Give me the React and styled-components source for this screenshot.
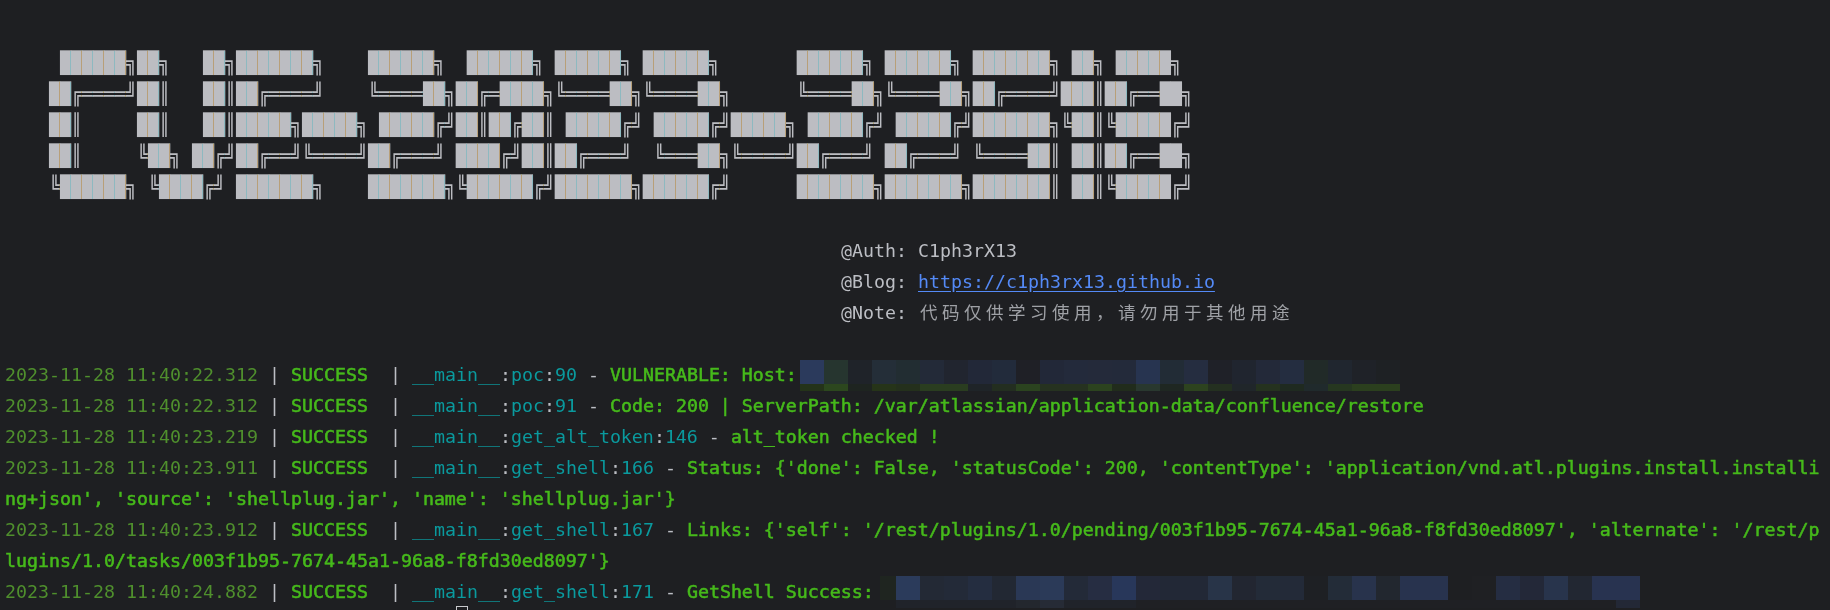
import React from 'react';
import styled, { createGlobalStyle } from 'styled-components';

const GlobalStyle = createGlobalStyle`
  html, body {
    margin: 0;
    height: 610px;
    overflow: hidden;
    background: #1e1f22;
  }
`;

const Terminal = styled.div`
  height: 610px;
  overflow: hidden;
  padding: 47px 0 0 5px;
  box-sizing: border-box;
  background: #1e1f22;
  color: #bcbec4;
  font-family: "DejaVu Sans Mono", "Liberation Mono", "Noto Sans CJK SC", monospace;
  font-size: 18.27px;
  line-height: 31px;
`;

const Line = styled.div`
  height: 31px;
  white-space: pre;
`;

const ArtBlock = styled.div`
  position: relative;
  width: 1155px;
  height: 155px;
  margin-bottom: 33px;
  color: #bcbdc2;

  /* seams between the block cells, darken leaves the dark background alone */
  &::after {
    content: '';
    position: absolute;
    inset: 0;
    mix-blend-mode: darken;
    background: repeating-linear-gradient(
      90deg,
      #b89f78 0 1px,
      transparent 1px 11px,
      #8db9c0 11px 12px,
      transparent 12px 22px
    );
    background-position: 10px 0;
  }
`;

const ArtLine = styled.div`
  height: 31px;
  white-space: pre;
  transform: scaleY(1.14);
`;

const Meta = styled.div`
  padding-left: 836px;
  margin-bottom: 31px;
`;

const Link = styled.a`
  color: #548af7;
  text-decoration: underline;
  text-underline-offset: 3px;
`;

const Cjk = styled.span`
  margin-left: 2px;
  font-family: "Noto Sans CJK SC", sans-serif;
  font-size: 17.5px;
  line-height: 0;
  letter-spacing: 4.5px;
  color: #9fa1a6;
`;

const Stamp = styled.span`
  color: #4f8f2d;
`;

const Level = styled.span`
  color: #46ba1b;
  -webkit-text-stroke: 0.55px #46ba1b;
`;

const Source = styled.span`
  color: #0a9a9e;
`;

const Mosaic = styled.span`
  position: relative;
  display: inline-block;
  width: 0;
  height: 0;
  vertical-align: top;
`;

const MosaicGrid = styled.span`
  position: absolute;
  left: ${(p) => p.$left}px;
  top: ${(p) => p.$top}px;
  display: grid;
  grid-template-columns: repeat(${(p) => p.$cols}, 24px);
  grid-template-rows: 24px ${(p) => p.$foot}px;
`;

const Tile = styled.span`
  background: ${(p) => p.$color};
`;

const FaintEdge = styled.span`
  position: absolute;
  left: 6px;
  top: 0;
  width: 16px;
  height: 24px;
  background: #1f2520;
`;

const Cursor = styled.span`
  display: inline-block;
  box-sizing: border-box;
  width: 12px;
  height: 24px;
  margin-top: -1px;
  border: 1px solid #c8c9cc;
  vertical-align: top;
`;

// the E and the first hyphen overlap in the banner, so they are one glyph here
const GLYPHS = {
  C: [' ██████╗', '██╔════╝', '██║     ', '██║     ', '╚██████╗'],
  V: ['██╗   ██╗', '██║   ██║', '██║   ██║', '╚██╗ ██╔╝', ' ╚████╔╝ '],
  E: ['███████╗    ', '██╔════╝    ', '█████╗█████╗', '██╔══╝╚════╝', '███████╗    '],
  '-': ['      ', '      ', '█████╗', '╚════╝', '      '],
  2: ['██████╗ ', '╚════██╗', ' █████╔╝', '██╔═══╝ ', '███████╗'],
  0: [' ██████╗ ', '██╔═████╗', '██║██╔██║', '████╔╝██║', '╚██████╔╝'],
  3: ['██████╗ ', '╚════██╗', ' █████╔╝', ' ╚═══██╗', '██████╔╝'],
  5: ['███████╗', '██╔════╝', '███████╗', '╚════██║', '███████║'],
  1: [' ██╗', '███║', '╚██║', ' ██║', ' ██║'],
  8: [' █████╗ ', '██╔══██╗', '╚█████╔╝', '██╔══██╗', '╚█████╔╝'],
};

const ART = [0, 1, 2, 3, 4].map((row) =>
  '    ' + [...'CVE2023-22518'].map((ch) => GLYPHS[ch][row]).join('')
);

const HOST_TOP = [
  '#2b3a5c', '#26352f', '#1f2329', '#242e38', '#222d32', '#232a38', '#21252f', '#222838', '#222b3b',
  '#1f2026', '#222838', '#232a3b', '#242a3a', '#232a3a', '#273450', '#222c36', '#252d40', '#1f2128',
  '#20252f', '#232939', '#242d40', '#212a28', '#20262f', '#1f2228', '#1e2124',
];
const HOST_FOOT = [
  '#243319', '#2c471e', '#1e2420', '#263419', '#24301c', '#2a3d20', '#2a3d20', '#1f2428', '#232e20',
  '#2b431f', '#263220', '#263220', '#2c431f', '#212c1c', '#29382f', '#1f2722', '#2d431f', '#243020',
  '#20262a', '#25321f', '#1f2a20', '#202a2c', '#263720', '#2b3f1e', '#2b3f1e',
];
const SHELL_TOP = [
  '#2b3b5b', '#232935', '#232a38', '#242d40', '#222833', '#2a3855', '#2b3a58', '#232a38', '#262d42',
  '#28375a', '#232838', '#222836', '#222836', '#283448', '#222631', '#232b38', '#232a38', '#1e2024',
  '#232c38', '#28334c', '#22272f', '#28334e', '#28334e', '#1e1f22', '#1f2023', '#252d42', '#232838',
  '#28344c', '#222732', '#283350', '#283350',
];
const SHELL_FOOT = SHELL_TOP.map((_, i) => {
  if (i === 5) return '#23272e';
  if (i === 6) return '#262b36';
  if (i === 30) return '#232836';
  return i < 10 ? '#20232a' : '#1f2024';
});

const Tiles = ({ top, foot, left, offset, height }) => (
  <Mosaic>
    <MosaicGrid $left={left} $top={offset} $cols={top.length} $foot={height}>
      {top.map((c, i) => <Tile key={`t${i}`} $color={c} />)}
      {foot.map((c, i) => <Tile key={`f${i}`} $color={c} />)}
    </MosaicGrid>
  </Mosaic>
);

const Log = ({ time, func, line, children }) => (
  <Line>
    <Stamp>2023-11-28 {time}</Stamp> | <Level>SUCCESS </Level> | <Source>__main__</Source>:<Source>{func}</Source>:<Source>{line}</Source> - <Level>{children}</Level>
  </Line>
);

export default function App() {
  return (
    <Terminal>
      <GlobalStyle />
      <ArtBlock>
        {ART.map((row, i) => <ArtLine key={i}>{row}</ArtLine>)}
      </ArtBlock>

      <Meta>
        <Line>@Auth: C1ph3rX13</Line>
        <Line>@Blog: <Link href="#blog">https://c1ph3rx13.github.io</Link></Line>
        <Line>@Note: <Cjk>代码仅供学习使用，请勿用于其他用途</Cjk></Line>
      </Meta>

      <Log time="11:40:22.312" func="poc" line="90">
        VULNERABLE: Host:
        <Tiles top={HOST_TOP} foot={HOST_FOOT} left={3} offset={1} height={7} />
      </Log>
      <Log time="11:40:22.312" func="poc" line="91">Code: 200 | ServerPath: /var/atlassian/application-data/confluence/restore</Log>
      <Log time="11:40:23.219" func="get_alt_token" line="146">alt_token checked !</Log>
      <Log time="11:40:23.911" func="get_shell" line="166">{"Status: {'done': False, 'statusCode': 200, 'contentType': 'application/vnd.atl.plugins.install.installi"}</Log>
      <Line><Level>{"ng+json', 'source': 'shellplug.jar', 'name': 'shellplug.jar'}"}</Level></Line>
      <Log time="11:40:23.912" func="get_shell" line="167">{"Links: {'self': '/rest/plugins/1.0/pending/003f1b95-7674-45a1-96a8-f8fd30ed8097', 'alternate': '/rest/p"}</Log>
      <Line><Level>{"lugins/1.0/tasks/003f1b95-7674-45a1-96a8-f8fd30ed8097'}"}</Level></Line>
      <Log time="11:40:24.882" func="get_shell" line="171">
        GetShell Success:
        <Mosaic><FaintEdge /></Mosaic>
        <Tiles top={SHELL_TOP} foot={SHELL_FOOT} left={22} offset={0} height={8} />
      </Log>
      <Line>{' '.repeat(41)}<Cursor /></Line>
    </Terminal>
  );
}
